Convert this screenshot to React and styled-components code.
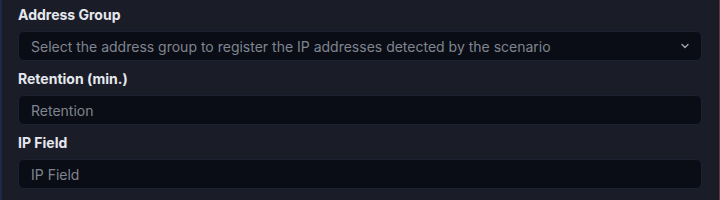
import React from "react";
import styled, { createGlobalStyle } from "styled-components";

const GlobalStyle = createGlobalStyle`
  html, body { margin: 0; padding: 0; background: #1a1d28; }
  body { font-family: Inter, "Noto Sans", sans-serif; }
  * { box-sizing: border-box; }
`;

const Panel = styled.div`
  width: 720px;
  height: 200px;
  background: #1a1d28;
  border-left: 2px solid #1f2845;
  border-right: 1px solid #5a3a3e;
  padding: 6px 17px 0 16px;
  display: flex;
  flex-direction: column;
  gap: 9px;
`;

const Field = styled.div`
  display: flex;
  flex-direction: column;
  gap: 7px;
`;

const Label = styled.label`
  font-size: 14px;
  font-weight: 700;
  color: #e6e8ee;
  line-height: 18px;
`;

const Box = styled.div`
  height: 30px;
  border-radius: 6px;
  background: #0a0d16;
  border: 1px solid #1c2132;
  display: flex;
  align-items: center;
  justify-content: space-between;
  padding: 0 10px 0 12px;
  font-size: 14px;
  color: #80858f;
`;

const Chevron = () => (
  <svg width="12" height="12" viewBox="0 0 24 24" fill="none" stroke="#a4a8b3" strokeWidth="2.6" strokeLinecap="round" strokeLinejoin="round">
    <path d="M6 9l6 6 6-6" />
  </svg>
);

export default function App() {
  return (
    <>
      <GlobalStyle />
      <Panel>
        <Field>
          <Label>Address Group</Label>
          <Box>
            <span>Select the address group to register the IP addresses detected by the scenario</span>
            <Chevron />
          </Box>
        </Field>
        <Field>
          <Label>Retention (min.)</Label>
          <Box>Retention</Box>
        </Field>
        <Field>
          <Label>IP Field</Label>
          <Box>IP Field</Box>
        </Field>
      </Panel>
    </>
  );
}
